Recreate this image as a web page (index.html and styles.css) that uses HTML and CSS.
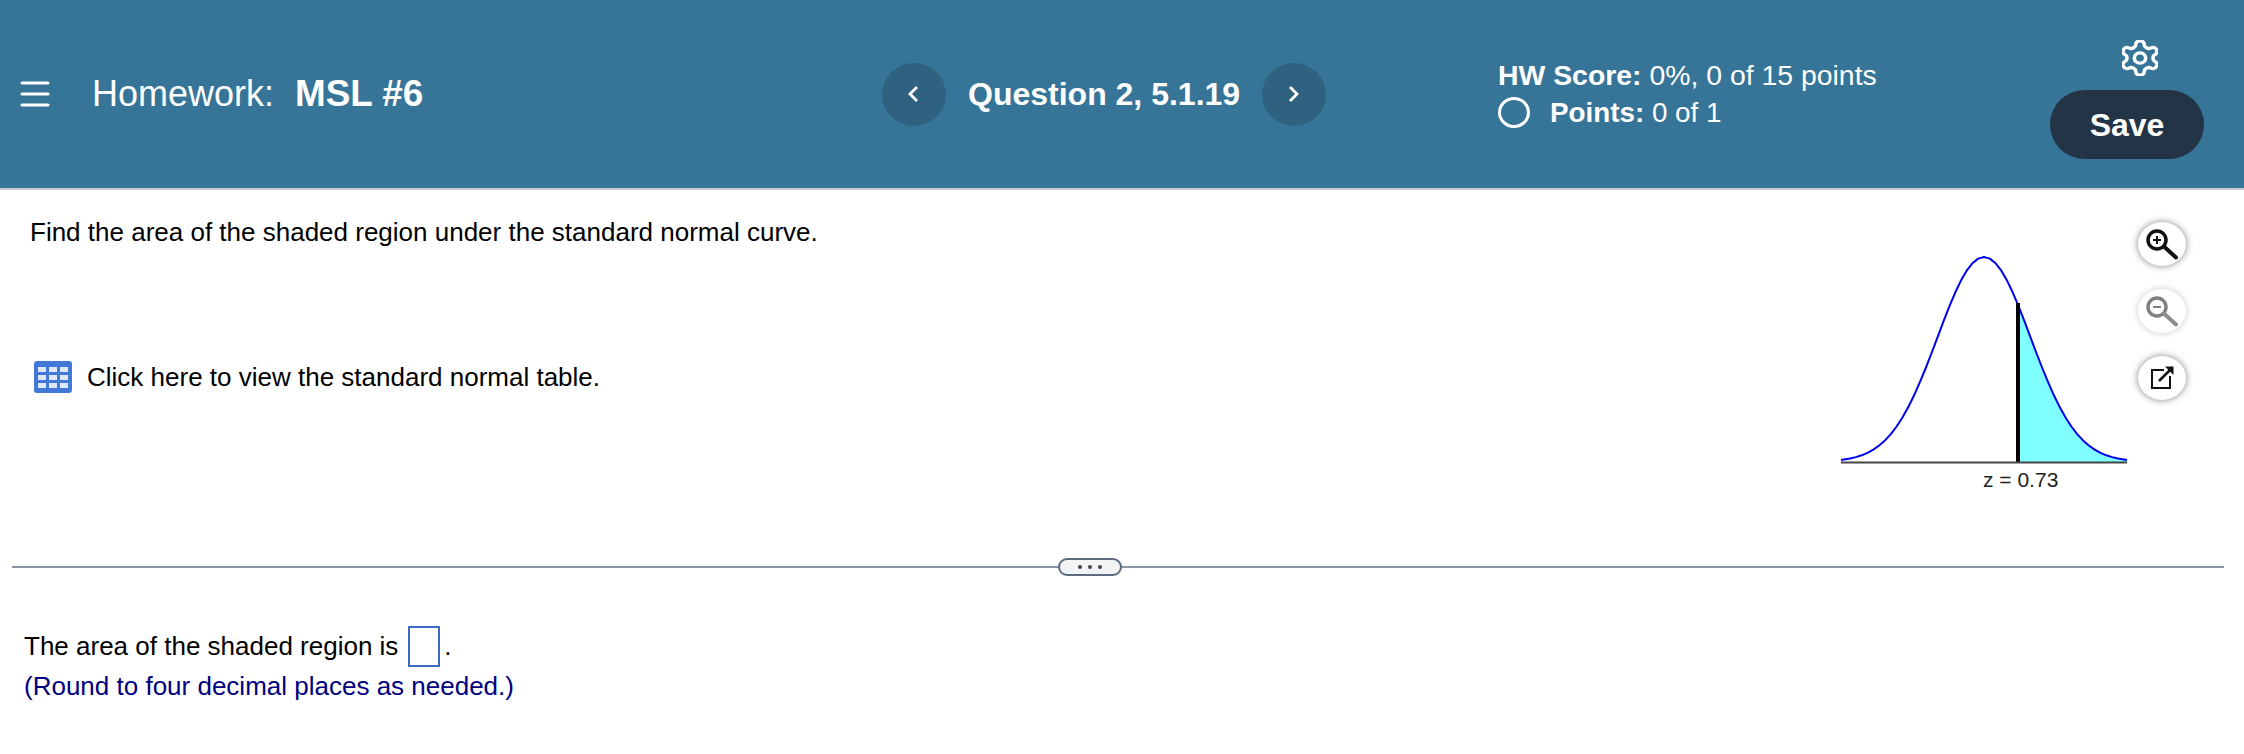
FILE: index.html
```html
<!DOCTYPE html>
<html lang="en">
<head>
<meta charset="utf-8">
<title>Homework: MSL #6</title>
<link rel="stylesheet" href="styles.css">
</head>
<body>
<header class="topbar">
  <div class="title-group">
    <svg class="menu-icon" width="30" height="28" viewBox="0 0 30 28" aria-hidden="true">
      <path d="M2 3H28M2 14H28M2 25H28" fill="none" stroke="#fff" stroke-width="3" stroke-linecap="round"/>
    </svg>
    <div class="title">Homework:<b class="title-name">MSL #6</b></div>
  </div>
  <nav class="question-nav">
    <button class="nav-btn" type="button" aria-label="Previous">
      <svg width="14" height="18" viewBox="0 0 14 18"><path d="M10 2L3 9L10 16" fill="none" stroke="#fff" stroke-width="2.800"/></svg>
    </button>
    <span class="question-label">Question 2, 5.1.19</span>
    <button class="nav-btn" type="button" aria-label="Next">
      <svg width="14" height="18" viewBox="0 0 14 18"><path d="M3 2L10 9L3 16" fill="none" stroke="#fff" stroke-width="2.800"/></svg>
    </button>
  </nav>
  <div class="score">
    <div class="score-line"><b>HW Score:</b> 0%, 0 of 15 points</div>
    <div class="score-line points"><span class="radio"></span><span class="points-text"><b>Points:</b> 0 of 1</span></div>
  </div>
  <div class="actions">
    <svg class="gear" width="36" height="36" viewBox="2.5 1.5 19 21" preserveAspectRatio="none" aria-hidden="true">
      <path d="M12.22 2h-.44a2 2 0 0 0-2 2v.18a2 2 0 0 1-1 1.73l-.43.25a2 2 0 0 1-2 0l-.15-.08a2 2 0 0 0-2.73.73l-.22.38a2 2 0 0 0 .73 2.73l.15.1a2 2 0 0 1 1 1.72v.51a2 2 0 0 1-1 1.74l-.15.09a2 2 0 0 0-.73 2.73l.22.38a2 2 0 0 0 2.73.73l.15-.08a2 2 0 0 1 2 0l.43.25a2 2 0 0 1 1 1.73V20a2 2 0 0 0 2 2h.44a2 2 0 0 0 2-2v-.18a2 2 0 0 1 1-1.73l.43-.25a2 2 0 0 1 2 0l.15.08a2 2 0 0 0 2.73-.73l.22-.39a2 2 0 0 0-.73-2.73l-.15-.08a2 2 0 0 1-1-1.74v-.5a2 2 0 0 1 1-1.74l.15-.09a2 2 0 0 0 .73-2.73l-.22-.38a2 2 0 0 0-2.73-.73l-.15.08a2 2 0 0 1-2 0l-.43-.25a2 2 0 0 1-1-1.73V4a2 2 0 0 0-2-2z" fill="none" stroke="#fff" stroke-width="1.900"/>
      <circle cx="12" cy="12" r="3" fill="none" stroke="#fff" stroke-width="1.900"/>
    </svg>
    <button class="save" type="button">Save</button>
  </div>
</header>

<main>
  <section class="question">
    <div class="prompt">
      <p class="prompt-text">Find the area of the shaded region under the standard normal curve.</p>
      <div class="table-link">
        <svg width="38" height="32" viewBox="0 0 38 32" aria-hidden="true">
          <rect width="38" height="32" rx="3" fill="#4478d6"/>
          <g fill="#dfe8f9">
            <rect x="4" y="6" width="8" height="5"/><rect x="15" y="6" width="8" height="5"/><rect x="26" y="6" width="8" height="5"/>
            <rect x="4" y="14" width="8" height="5"/><rect x="15" y="14" width="8" height="5"/><rect x="26" y="14" width="8" height="5"/>
            <rect x="4" y="22" width="8" height="5"/><rect x="15" y="22" width="8" height="5"/><rect x="26" y="22" width="8" height="5"/>
          </g>
        </svg>
        <span>Click here to view the standard normal table.</span>
      </div>
    </div>
    <svg class="curve" width="296" height="248" viewBox="0 0 296 248" role="img">
      <polygon fill="#7fffff" points="182,54.9 182.95,57.2 188.8,72.2 194.6,87.6 200.4,103 206.25,118 212.1,132.2 217.9,145.3 223.7,157.1 229.55,167.5 235.4,176.5 241.2,184.1 247,190.4 252.85,195.5 258.7,199.6 264.5,202.8 270.3,205.3 276.15,207.1 282,208.5 291,210 291,212 182,212"/>
      <polyline fill="none" stroke="#0000f0" stroke-width="2" stroke-linejoin="round" points="5,210 14,208.5 19.85,207.1 25.7,205.3 31.5,202.8 37.3,199.6 43.15,195.5 49,190.4 54.8,184.1 60.6,176.5 66.45,167.5 72.3,157.1 78.1,145.3 83.9,132.2 89.75,118 95.6,103 101.4,87.6 107.2,72.2 113.05,57.2 118.9,43.3 124.7,31.1 130.5,20.9 136.35,13.3 142.2,8.6 148,7 153.8,8.6 159.65,13.3 165.5,20.9 171.3,31.1 177.1,43.3 182,54.9 182.95,57.2 188.8,72.2 194.6,87.6 200.4,103 206.25,118 212.1,132.2 217.9,145.3 223.7,157.1 229.55,167.5 235.4,176.5 241.2,184.1 247,190.4 252.85,195.5 258.7,199.6 264.5,202.8 270.3,205.3 276.15,207.1 282,208.5 291,210"/>
      <rect x="180" y="53" width="4" height="159" fill="#000"/>
      <rect x="5" y="211.500" width="286" height="2" fill="#444"/>
      <text class="curve-label" x="147" y="236.500">z = 0.73</text>
    </svg>
    <div class="tools">
      <button class="tool" type="button" aria-label="Zoom in">
        <svg width="48" height="44" viewBox="0 0 48 44"><circle cx="19" cy="18" r="9" fill="none" stroke="#111" stroke-width="3.500"/><path d="M15 18H23M19 14V22" stroke="#111" stroke-width="2"/><path d="M26.500 25L38 35.500" stroke="#111" stroke-width="4" stroke-linecap="round"/></svg>
      </button>
      <button class="tool tool-off" type="button" aria-label="Zoom out">
        <svg width="48" height="44" viewBox="0 0 48 44"><circle cx="19" cy="18" r="9" fill="none" stroke="#808080" stroke-width="3.500"/><path d="M15 18H23" stroke="#808080" stroke-width="2"/><path d="M26.500 25L38 35.500" stroke="#8c8c8c" stroke-width="4" stroke-linecap="round"/></svg>
      </button>
      <button class="tool" type="button" aria-label="Open in new window">
        <svg width="48" height="44" viewBox="0 0 48 44"><path d="M26 14H14V32H32V20" fill="none" stroke="#111" stroke-width="2"/><path d="M21 25L33 13" stroke="#111" stroke-width="2.500"/><path d="M27 10.500H35.500V19Z" fill="#111"/></svg>
      </button>
    </div>
  </section>

  <div class="divider">
    <span class="rule rule-left"></span>
    <span class="pill"><i></i><i></i><i></i></span>
    <span class="rule"></span>
  </div>

  <section class="answer">
    <div class="answer-line">The area of the shaded region is<span class="answer-box"></span>.</div>
    <p class="hint">(Round to four decimal places as needed.)</p>
  </section>
</main>
</body>
</html>
```

FILE: styles.css
```css
* { box-sizing: border-box; }

html, body {
  margin: 0;
  padding: 0;
  background: #fff;
  font-family: "Liberation Sans", Arial, sans-serif;
  color: #000;
}

button {
  font-family: inherit;
  border: 0;
  padding: 0;
  margin: 0;
}

p { margin: 0; }

.topbar {
  display: flex;
  align-items: center;
  height: 190px;
  background: #367597;
  border-bottom: 2px solid #c8ccd4;
  color: #fff;
}

.title-group {
  flex: 0 0 882px;
  display: flex;
  align-items: center;
  padding-left: 20px;
}

.menu-icon { margin-right: 42px; }

.title {
  font-size: 36px;
  line-height: 44px;
}

.title-name {
  margin-left: 21px;
  font-size: 36.8px;
  font-weight: 700;
}

.question-nav {
  flex: 0 0 616px;
  display: flex;
  align-items: center;
}

.nav-btn {
  width: 64px;
  height: 63px;
  border-radius: 50%;
  background: #2f6280;
  display: flex;
  align-items: center;
  justify-content: center;
}

.question-label {
  width: 316px;
  padding-left: 22px;
  font-size: 32px;
  font-weight: 700;
  white-space: nowrap;
}

.score {
  flex: 1;
  font-size: 28.4px;
}

.score-line {
  height: 37px;
  line-height: 37px;
  white-space: nowrap;
}

.points {
  display: flex;
  align-items: center;
  gap: 20px;
}

.points-text { font-size: 27.8px; }

.radio {
  width: 32px;
  height: 31px;
  border: 3.500px solid #fff;
  border-radius: 50%;
}

.actions {
  flex: 0 0 154px;
  margin-right: 40px;
  align-self: flex-start;
  display: flex;
  flex-direction: column;
  padding-top: 40px;
}

.gear {
  margin: 0 0 14px 72px;
}

.save {
  width: 154px;
  height: 69px;
  padding-top: 2px;
  border-radius: 35px;
  background: #223445;
  color: #fff;
  font-size: 32px;
  font-weight: 700;
}

.question {
  display: flex;
  align-items: flex-start;
  height: 368px;
}

.prompt {
  flex: 0 0 1836px;
  padding: 27px 0 0 30px;
}

.prompt-text {
  font-size: 26px;
  line-height: 30px;
}

.table-link {
  margin-top: 114px;
  padding-left: 4px;
  display: flex;
  align-items: center;
  gap: 15px;
  font-size: 26px;
  line-height: 32px;
}

.curve {
  flex: none;
  margin-top: 60px;
}

.curve-label {
  font-family: "Liberation Sans", Arial, sans-serif;
  font-size: 21px;
  fill: #222;
}

.tools {
  flex: none;
  margin: 32px 0 0 6px;
  display: flex;
  flex-direction: column;
  gap: 23px;
}

.tool {
  width: 48px;
  height: 44px;
  border-radius: 50%;
  background: #fff;
  box-shadow: 0 0 7px rgba(0, 0, 0, 0.5);
  display: block;
}

.tool svg { display: block; }

.tool-off { box-shadow: 0 0 7px rgba(0, 0, 0, 0.22); }

.divider {
  display: flex;
  align-items: center;
  height: 18px;
  margin: 0 20px 0 12px;
}

.rule {
  flex: 1;
  height: 2px;
  background: #8a94a3;
}

.rule-left { flex: 0 0 1046px; }

.pill {
  flex: none;
  width: 64px;
  height: 18px;
  border: 2px solid #5c6b7f;
  border-radius: 9px;
  background: #f3f4f6;
  display: flex;
  align-items: center;
  justify-content: center;
  gap: 6px;
}

.pill i {
  width: 4px;
  height: 4px;
  border-radius: 50%;
  background: #444;
}

.answer {
  padding: 50px 0 0 24px;
  font-size: 26px;
}

.answer-line {
  display: flex;
  align-items: center;
  height: 41px;
}

.answer-box {
  width: 32px;
  height: 41px;
  margin: 0 4px 0 10px;
  border: 2px solid #3f68c4;
  background: #fff;
}

.hint {
  margin-top: 4px;
  line-height: 30px;
  color: #000080;
}
```
